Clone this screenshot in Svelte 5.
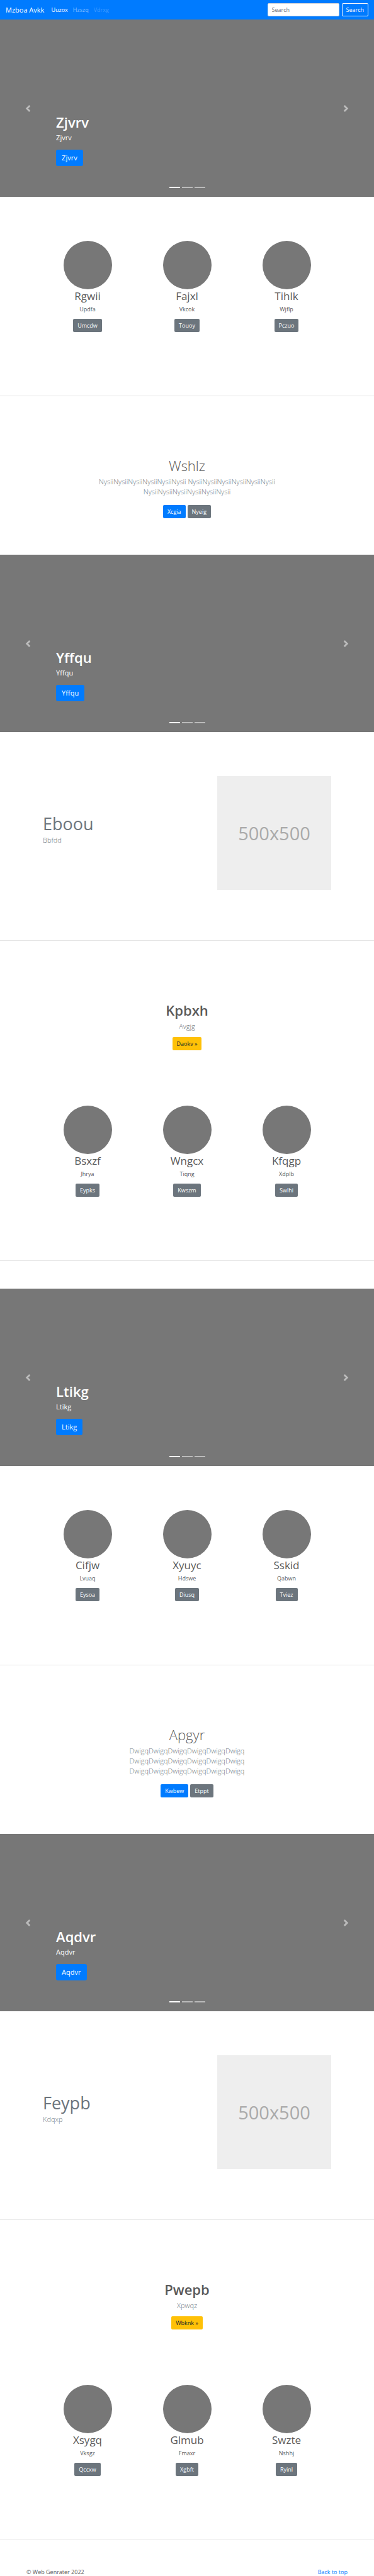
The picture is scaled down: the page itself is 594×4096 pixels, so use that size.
<script>
  const first = {
    slide: 'Zjvrv',
    people: [
      { name: 'Rgwii', note: 'Updfa', action: 'Umcdw' },
      { name: 'Fajxl', note: 'Vkcok', action: 'Touoy' },
      { name: 'Tihlk', note: 'Wjflp', action: 'Pczuo' },
    ],
    hero: {
      title: 'Wshlz',
      text: 'NysiiNysiiNysiiNysiiNysiiNysii NysiiNysiiNysiiNysiiNysiiNysii NysiiNysiiNysiiNysiiNysiiNysii',
      primary: 'Xcgia',
      secondary: 'Nyeig',
    },
    slide2: 'Yffqu',
    feature: { title: 'Eboou', text: 'Bbfdd' },
    callout: { title: 'Kpbxh', text: 'Avgjg', action: 'Daokv »' },
    people2: [
      { name: 'Bsxzf', note: 'Jhrya', action: 'Eypks' },
      { name: 'Wngcx', note: 'Tiqng', action: 'Kwszm' },
      { name: 'Kfqgp', note: 'Xdplb', action: 'Swlhi' },
    ],
  };
  const second = {
    slide: 'Ltikg',
    people: [
      { name: 'Cifjw', note: 'Lvuaq', action: 'Eysoa' },
      { name: 'Xyuyc', note: 'Hdswe', action: 'Diusq' },
      { name: 'Sskid', note: 'Qabwn', action: 'Tviez' },
    ],
    hero: {
      title: 'Apgyr',
      text: 'DwigqDwigqDwigqDwigqDwigqDwigq DwigqDwigqDwigqDwigqDwigqDwigq DwigqDwigqDwigqDwigqDwigqDwigq',
      primary: 'Kwbew',
      secondary: 'Etppt',
    },
    slide2: 'Aqdvr',
    feature: { title: 'Feypb', text: 'Kdqxp' },
    callout: { title: 'Pwepb', text: 'Xpwqz', action: 'Wbknk »' },
    people2: [
      { name: 'Xsygq', note: 'Vksgz', action: 'Qccxw' },
      { name: 'Glmub', note: 'Fmaxr', action: 'Xgbft' },
      { name: 'Swzte', note: 'Nshhj', action: 'Ryinl' },
    ],
  };
</script>

{#snippet carousel(label)}
  <section class="carousel">
    <div class="caption">
      <h1 class="strong">{label}</h1>
      <p>{label}</p>
      <a class="btn large primary" href="#top">{label}</a>
    </div>
    <button class="control prev" aria-label="Previous">
      <svg viewBox="0 0 8 8" aria-hidden="true"><path d="M5.25 0l-4 4 4 4 1.5-1.5-2.5-2.5 2.5-2.5-1.5-1.5z" /></svg>
    </button>
    <button class="control next" aria-label="Next">
      <svg viewBox="0 0 8 8" aria-hidden="true"><path d="M2.75 0l-1.5 1.5 2.5 2.5-2.5 2.5 1.5 1.5 4-4-4-4z" /></svg>
    </button>
    <div class="indicators">
      <span class="active"></span><span></span><span></span>
    </div>
  </section>
{/snippet}

{#snippet team(people)}
  <section class="team">
    {#each people as person}
      <div class="person">
        <div class="avatar"></div>
        <h2>{person.name}</h2>
        <p>{person.note}</p>
        <a class="btn secondary" href="#top">{person.action}</a>
      </div>
    {/each}
  </section>
{/snippet}

{#snippet page(block)}
  {@render carousel(block.slide)}
  <div class="spaced">{@render team(block.people)}</div>
  <hr />
  <section class="hero">
    <h1 class="light">{block.hero.title}</h1>
    <p class="lead">{block.hero.text}</p>
    <div class="actions">
      <a class="btn primary" href="#top">{block.hero.primary}</a>
      <a class="btn secondary" href="#top">{block.hero.secondary}</a>
    </div>
  </section>
  {@render carousel(block.slide2)}
  <section class="feature">
    <div>
      <h2>{block.feature.title}</h2>
      <p class="lead">{block.feature.text}</p>
    </div>
    <div class="placeholder">500x500</div>
  </section>
  <hr />
  <section class="callout">
    <h1 class="strong">{block.callout.title}</h1>
    <p class="lead">{block.callout.text}</p>
    <a class="btn warning" href="#top">{block.callout.action}</a>
  </section>
  {@render team(block.people2)}
  <hr />
{/snippet}

<div class="page" id="top">
  <nav>
    <a class="brand" href="#top">Mzboa Avkk</a>
    <div class="links">
      <a class="current" href="#top">Uuzox</a>
      <a href="#top">Hzszq</a>
      <a class="disabled" href="#top">Vdrxg</a>
    </div>
    <form>
      <input type="search" placeholder="Search" aria-label="Search" />
      <button type="button">Search</button>
    </form>
  </nav>
  {@render page(first)}
  <div class="gap"></div>
  {@render page(second)}
  <footer>
    <p>© Web Genrater 2022</p>
    <a href="#top">Back to top</a>
  </footer>
</div>

<style>
  :global(body) {
    margin: 0;
    background: #fff;
  }
  .page,
  .page * {
    box-sizing: border-box;
  }
  .page {
    font-family: 'Open Sans', 'Noto Sans', sans-serif;
    font-size: 9px;
    line-height: 13px;
    color: #5a5a5a;
  }
  h1,
  h2,
  p {
    margin: 0;
  }
  a {
    color: #007bff;
    text-decoration: none;
  }
  hr {
    height: 1px;
    margin: 0;
    border: 0;
    background: #e5e5e5;
  }
  h1 {
    font-size: 22px;
    line-height: 26px;
  }
  .strong {
    font-weight: 600;
  }
  .light {
    font-weight: 300;
  }
  .lead {
    font-size: 11px;
    line-height: 16px;
    font-weight: 300;
    color: #6c757d;
  }

  nav {
    display: flex;
    align-items: center;
    height: 31px;
    padding: 0 9px;
    background: #007bff;
  }
  .brand {
    margin-right: 11px;
    font-size: 11px;
    color: #fff;
  }
  .links {
    display: flex;
    flex: 1;
    gap: 8px;
  }
  .links a {
    color: rgba(255, 255, 255, 0.5);
  }
  .links .current {
    color: #fff;
  }
  .links .disabled {
    color: rgba(255, 255, 255, 0.25);
  }
  form {
    display: flex;
    gap: 4px;
  }
  input,
  form button {
    height: 21px;
    padding: 0 6px;
    border-radius: 2px;
    font: inherit;
  }
  input {
    width: 114px;
    border: 1px solid #ced4da;
    background: #fff;
    color: #495057;
  }
  input::placeholder {
    color: #6c757d;
    opacity: 1;
  }
  form button {
    border: 1px solid #f8f9fa;
    background: transparent;
    color: #f8f9fa;
  }

  .btn {
    display: inline-block;
    padding: 4px 7px;
    border-radius: 2px;
    color: #fff;
  }
  .large {
    padding: 5px 9px;
    border-radius: 3px;
    font-size: 11px;
    line-height: 16px;
  }
  .primary {
    background: #007bff;
  }
  .secondary {
    background: #6c757d;
  }
  .warning {
    background: #ffc107;
    color: #212529;
  }

  .carousel {
    position: relative;
    display: flex;
    align-items: flex-end;
    height: 282px;
    padding: 0 15% 49px;
    background: #777;
    color: #fff;
  }
  .caption {
    display: flex;
    flex-direction: column;
    align-items: flex-start;
  }
  .caption h1 {
    margin-bottom: 4px;
  }
  .caption p {
    margin-bottom: 11px;
    font-size: 11px;
    line-height: 16px;
  }
  .control {
    position: absolute;
    top: 0;
    bottom: 0;
    display: flex;
    align-items: center;
    justify-content: center;
    width: 15%;
    padding: 0;
    border: 0;
    background: none;
    opacity: 0.5;
  }
  .control svg {
    width: 11px;
    height: 11px;
    fill: #fff;
  }
  .prev {
    left: 0;
  }
  .next {
    right: 0;
  }
  .indicators {
    position: absolute;
    right: 0;
    bottom: 14px;
    left: 0;
    display: flex;
    justify-content: center;
    gap: 3px;
  }
  .indicators span {
    width: 17px;
    height: 2px;
    background: #fff;
    opacity: 0.5;
  }
  .indicators .active {
    opacity: 1;
  }

  .spaced {
    padding-top: 70px;
  }
  .team {
    display: grid;
    grid-template-columns: repeat(3, 1fr);
    padding: 0 60px 101px;
  }
  .person {
    display: flex;
    flex-direction: column;
    align-items: center;
  }
  .avatar {
    width: 77px;
    height: 77px;
    border-radius: 50%;
    background: #777;
  }
  .person h2 {
    margin-bottom: 4px;
    font-size: 17px;
    line-height: 21px;
    font-weight: 400;
  }
  .person p {
    margin-bottom: 9px;
  }

  .hero,
  .callout {
    display: flex;
    flex-direction: column;
    align-items: center;
    padding: 97px 20px 58px;
    text-align: center;
  }
  .hero h1,
  .callout h1 {
    margin-bottom: 5px;
  }
  .hero .lead {
    max-width: 320px;
    margin-bottom: 13px;
  }
  .actions {
    display: flex;
    gap: 3px;
  }
  .callout {
    padding-bottom: 88px;
  }
  .callout .lead {
    margin-bottom: 9px;
  }

  .feature {
    display: flex;
    align-items: center;
    justify-content: space-between;
    padding: 70px 68px 80px;
  }
  .feature h2 {
    margin-bottom: 4px;
    font-size: 27px;
    line-height: 28px;
    font-weight: 400;
    color: #6c757d;
  }
  .feature .lead {
    margin-bottom: 9px;
  }
  .placeholder {
    display: grid;
    place-items: center;
    width: 181px;
    height: 181px;
    background: #eee;
    color: #aaa;
    font-size: 29px;
    line-height: 40px;
  }

  .gap {
    height: 44px;
  }
  footer {
    display: flex;
    justify-content: space-between;
    padding: 44px 42px 0;
  }
</style>
